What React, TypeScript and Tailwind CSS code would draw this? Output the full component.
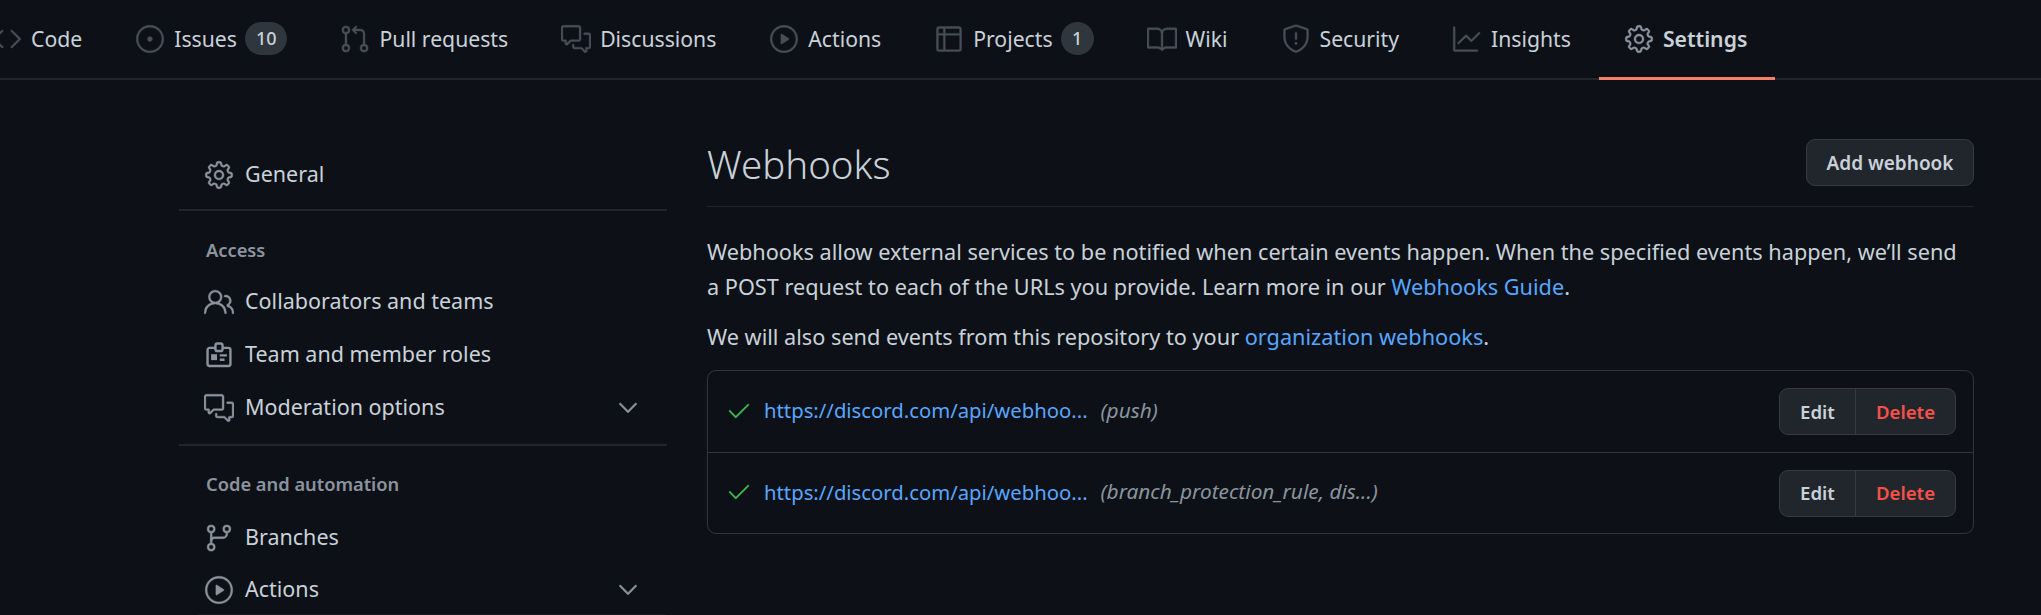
import React from "react";
import {
  GoCheck,
  GoChevronDown,
  GoCode,
  GoCommentDiscussion,
  GoGear,
  GoGitBranch,
  GoGitPullRequest,
  GoBook,
  GoGraph,
  GoIssueOpened,
  GoPeople,
  GoPlay,
  GoShield,
  GoTable,
} from "react-icons/go";

// octicons id-badge isn't in react-icons
function IdBadge({ className }: { className?: string }) {
  return (
    <svg viewBox="-1.5 -1.5 19 19" fill="none" className={className}>
      <g stroke="currentColor" style={{ strokeWidth: 1.5 }}>
        <path d="M5.5 3.5H2a1.25 1.25 0 0 0-1.25 1.25v9A1.25 1.25 0 0 0 2 15h12a1.25 1.25 0 0 0 1.25-1.25v-9A1.25 1.25 0 0 0 14 3.5h-3.5" />
        <rect x="5.75" y="0.75" width="4.5" height="4.75" rx="1.2" />
        <path d="M8.5 8.25h4.5M8.5 11h3" />
      </g>
      <rect x="3" y="7.5" width="3.75" height="3.75" fill="currentColor" style={{ strokeWidth: 0 }} />
    </svg>
  );
}

const tabs = [
  { Icon: GoCode, label: "Code" },
  { Icon: GoIssueOpened, label: "Issues", count: "10" },
  { Icon: GoGitPullRequest, label: "Pull requests" },
  { Icon: GoCommentDiscussion, label: "Discussions" },
  { Icon: GoPlay, label: "Actions" },
  { Icon: GoTable, label: "Projects", count: "1" },
  { Icon: GoBook, label: "Wiki" },
  { Icon: GoShield, label: "Security" },
  { Icon: GoGraph, label: "Insights" },
  { Icon: GoGear, label: "Settings", active: true },
];

function RepoTabs() {
  return (
    <nav className="flex h-[80px] border-b-2 border-[#21262d] -ml-[33px] text-[21.2px]">
      {tabs.map(({ Icon, label, count, active }) => (
        <div
          key={label}
          className={`flex items-center px-[28px] h-[80px] border-b-[3px] ${
            active ? "border-[#f78166] font-semibold" : "border-transparent"
          }`}
        >
          <Icon
            className={`w-[30px] h-[30px] -ml-[3px] mr-[9px] shrink-0 stroke-[0.3] ${
              active ? "text-[#8b949e]" : "text-[#484f58]"
            }`}
          />
          <span>{label}</span>
          {count && (
            <span className="ml-2 -mt-[1px] flex items-center justify-center h-[33px] min-w-[33px] px-[11px] rounded-full bg-[#30363d] text-[18px] font-medium">
              {count}
            </span>
          )}
        </div>
      ))}
    </nav>
  );
}

function SideItem({
  Icon,
  label,
  chevron,
}: {
  Icon: React.ComponentType<{ className?: string }>;
  label: string;
  chevron?: boolean;
}) {
  return (
    <div className="flex items-center h-[53px] pl-[27px] pr-[27px]">
      <Icon className="w-[30px] h-[30px] -ml-[2px] mr-[11px] shrink-0 text-[#8b949e] stroke-[0.3]" />
      <span className="flex-1">{label}</span>
      {chevron && <GoChevronDown className="w-[30px] h-[30px] -mr-[3px] text-[#8b949e] stroke-[0.3]" />}
    </div>
  );
}

function Sidebar() {
  return (
    <aside className="w-[488px] shrink-0 text-[21.5px]">
      <div className="pt-[68px]">
        <SideItem Icon={GoGear} label="General" />
      </div>
      <div className="mt-[8px] border-t-2 border-[#21262d] pt-[24px]">
        <h3 className="text-[18.3px] font-semibold text-[#8b949e] pl-[27px] leading-[30px] mb-[10px]">Access</h3>
        <SideItem Icon={GoPeople} label="Collaborators and teams" />
        <SideItem Icon={IdBadge} label="Team and member roles" />
        <SideItem Icon={GoCommentDiscussion} label="Moderation options" chevron />
      </div>
      <div className="mt-[10px] border-t-2 border-[#21262d] pt-[23px]">
        <h3 className="text-[18.3px] font-semibold text-[#8b949e] pl-[27px] leading-[30px] mb-[12px]">Code and automation</h3>
        <SideItem Icon={GoGitBranch} label="Branches" />
        <div className="-mt-[1px]">
          <SideItem Icon={GoPlay} label="Actions" chevron />
        </div>
        <div className="-mt-[2px] ml-[19px] border-t border-[#161b22]" />
      </div>
    </aside>
  );
}

function HookRow({ events, divider }: { events: string; divider?: boolean }) {
  return (
    <div className={`flex items-center h-[81px] pl-[18px] pr-[17px] ${divider ? "border-t border-[#30363d]" : ""}`}>
      <div className="flex items-center -mt-[2px]">
        <GoCheck className="w-[26px] h-[26px] mr-[12px] text-[#3fb950] stroke-[0.3]" />
        <a className="text-[#58a6ff] text-[20.3px]">https://discord.com/api/webhoo...</a>
        <em className="ml-[13px] text-[#8b949e] text-[20.8px]">{events}</em>
      </div>
      <div className="ml-auto flex h-[47px] rounded-[9px] border border-[#363b42] bg-[#21262d] font-semibold text-[18.6px]">
        <span className="flex items-center justify-center w-[75px]">Edit</span>
        <span className="flex items-center justify-center w-[100px] border-l border-[#363b42] text-[#f85149]">Delete</span>
      </div>
    </div>
  );
}

function Webhooks() {
  return (
    <main className="flex-1 pl-[40px]">
      <div className="flex items-center justify-between mt-[59px] pb-[20px] border-b border-[#21262d]">
        <h2 className="text-[38.5px] leading-[43px] pt-[4px] font-light">Webhooks</h2>
        <button className="h-[47px] w-[168px] pt-[2px] rounded-[9px] border border-[#363b42] bg-[#21262d] text-[19px] font-semibold">
          Add webhook
        </button>
      </div>
      <p className="mt-[27px] leading-[35px] text-[21.7px]">
        Webhooks allow external services to be notified when certain events happen. When the specified events happen, we’ll send
        <br />
        a POST request to each of the URLs you provide. Learn more in our <a className="text-[#58a6ff]">Webhooks Guide</a>.
      </p>
      <p className="mt-[15px] leading-[35px] text-[21.7px]">
        We will also send events from this repository to your <a className="text-[#58a6ff]">organization webhooks</a>.
      </p>
      <div className="mt-[16px] rounded-[9px] border border-[#30363d]">
        <HookRow events="(push)" />
        <HookRow events="(branch_protection_rule, dis...)" divider />
      </div>
    </main>
  );
}

export default function App() {
  return (
    <div className="h-[615px] w-[2041px] overflow-hidden bg-[#0d1117] text-[#c9d1d9] text-[20px] font-['Noto_Sans',sans-serif]">
      <RepoTabs />
      <div className="flex pl-[179px] pr-[67px]">
        <Sidebar />
        <Webhooks />
      </div>
    </div>
  );
}
